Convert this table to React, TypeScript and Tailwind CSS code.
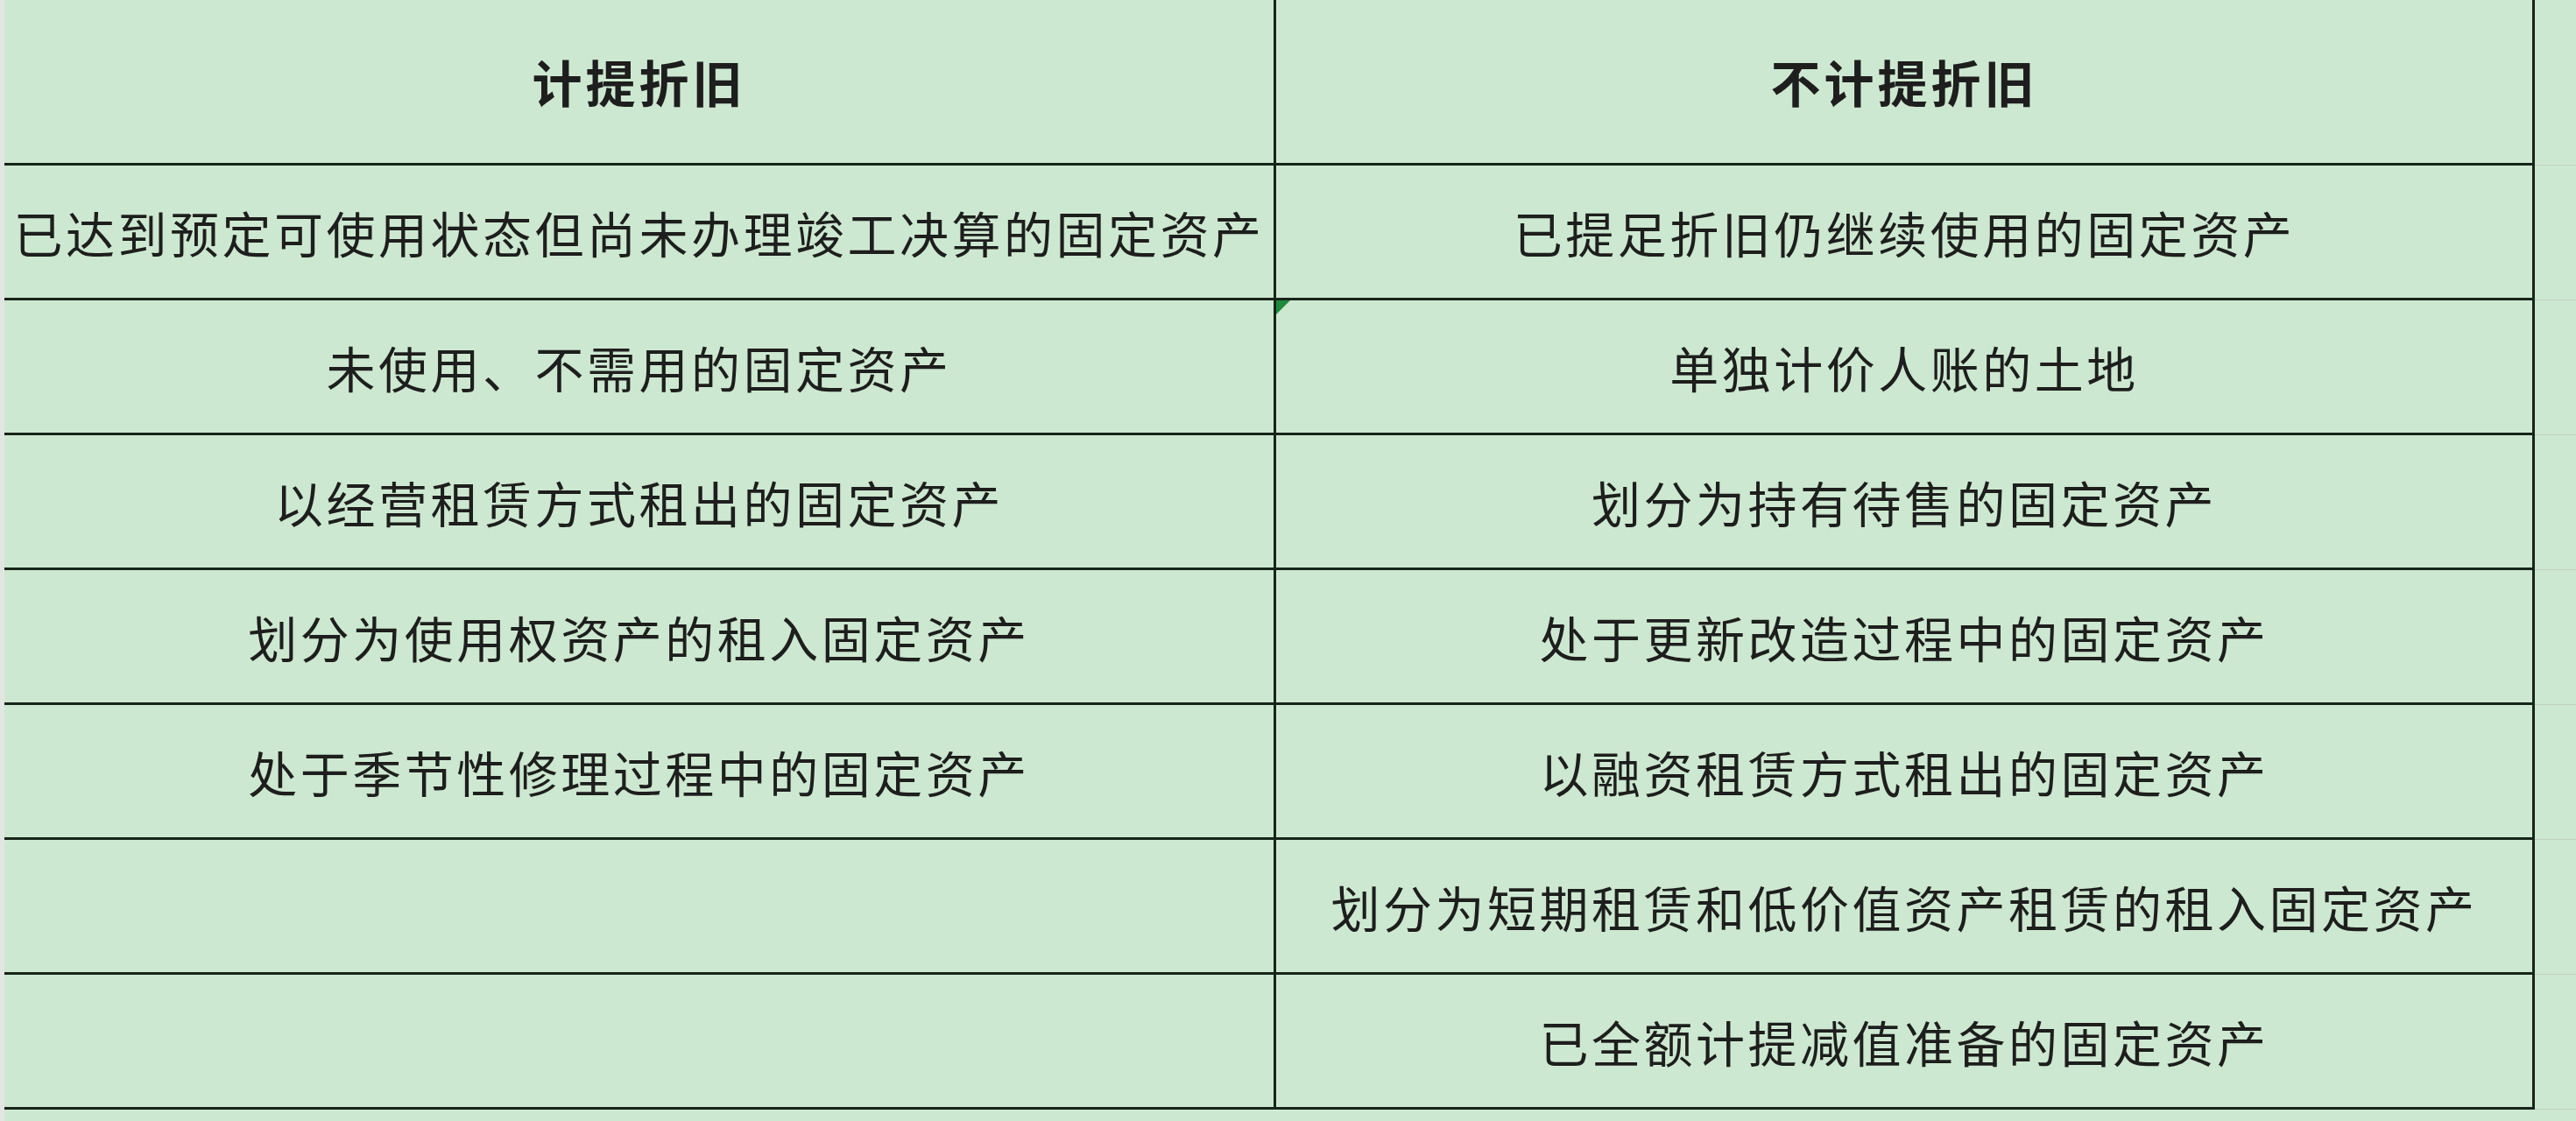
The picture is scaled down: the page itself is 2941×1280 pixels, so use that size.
const rows: [string, string][] = [
  ["已达到预定可使用状态但尚未办理竣工决算的固定资产", "已提足折旧仍继续使用的固定资产"],
  ["未使用、不需用的固定资产", "单独计价人账的土地"],
  ["以经营租赁方式租出的固定资产", "划分为持有待售的固定资产"],
  ["划分为使用权资产的租入固定资产", "处于更新改造过程中的固定资产"],
  ["处于季节性修理过程中的固定资产", "以融资租赁方式租出的固定资产"],
  ["", "划分为短期租赁和低价值资产租赁的租入固定资产"],
  ["", "已全额计提减值准备的固定资产"],
];

const font = "font-['Microsoft_YaHei','Noto_Sans_CJK_SC',sans-serif]";

export default function App() {
  return (
    <div className={`flex h-[1280px] w-full overflow-hidden bg-[#cde8d0] text-[#1e1e1e] ${font}`}>
      <div className="w-[5px] shrink-0 bg-[#e3e5e3]" />

      <div className="flex w-[2889px] shrink-0 flex-col">
        <div className="flex h-[189px] border-b-[3px] border-[#17241a]">
          <div className="flex w-[1452px] items-center justify-center border-r-[3px] border-[#17241a] text-[57px] font-bold tracking-[4px]">
            计提折旧
          </div>
          <div className="flex flex-1 items-center justify-center border-r-[3px] border-[#17241a] text-[57px] font-bold tracking-[4px]">
            不计提折旧
          </div>
        </div>

        {rows.map(([left, right], i) => (
          <div key={i} className="flex h-[154px] border-b-[3px] border-[#17241a]">
            <div className="flex w-[1452px] items-center justify-center border-r-[3px] border-[#17241a] text-[56px] tracking-[3.5px]">
              {left}
            </div>
            <div className="relative flex flex-1 items-center justify-center border-r-[3px] border-[#17241a] text-[56px] tracking-[3.5px]">
              {i === 1 && (
                <svg className="absolute left-0 top-0" width="16" height="16" viewBox="0 0 16 16">
                  <polygon points="0,0 16,0 0,16" fill="#1f8a3a" />
                </svg>
              )}
              {right}
            </div>
          </div>
        ))}
      </div>

      <div className="flex flex-1 flex-col">
        <div className="h-[189px] border-b border-[#c3cfc5]" />
        {rows.map((_, i) => (
          <div key={i} className="h-[154px] border-b border-[#c3cfc5]" />
        ))}
      </div>
    </div>
  );
}
